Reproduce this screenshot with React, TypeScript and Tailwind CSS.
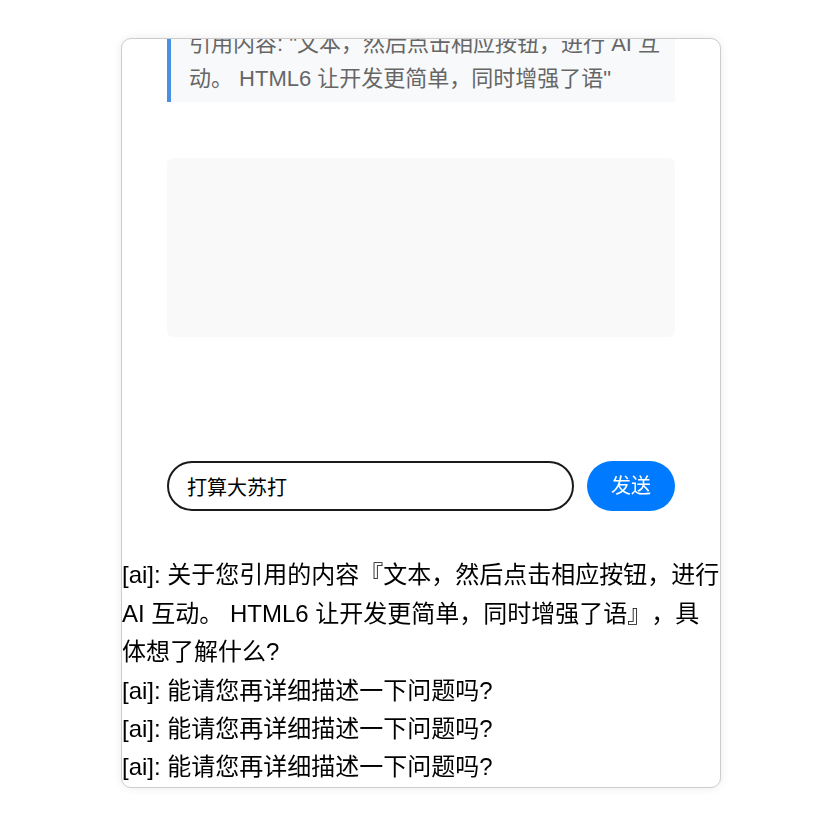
import React, { useEffect, useRef } from "react";

const font = '"Liberation Sans", "Noto Sans CJK SC", Arial, sans-serif';

export default function App() {
  const scroller = useRef<HTMLDivElement>(null);
  useEffect(() => {
    const el = scroller.current;
    if (el) el.scrollTop = el.scrollHeight;
  }, []);

  const messages = [
    "[ai]: 关于您引用的内容『文本，然后点击相应按钮，进行 AI 互动。 HTML6 让开发更简单，同时增强了语』，具体想了解什么?",
    "[ai]: 能请您再详细描述一下问题吗?",
    "[ai]: 能请您再详细描述一下问题吗?",
    "[ai]: 能请您再详细描述一下问题吗?",
  ];

  return (
    <div
      className="min-h-screen bg-white pl-[121px] pt-[38px] [text-spacing-trim:space-all]"
      style={{ fontFamily: font }}
    >
      <div
        ref={scroller}
        className="w-[600px] h-[750px] overflow-hidden rounded-[10px] border border-[#cccccc] bg-white shadow-[0_0_10px_rgba(0,0,0,0.08)]"
      >
        <div className="px-[45px] pt-[40px]">
          <div className="border-l-4 border-[#4a90e2] bg-[#f8f9fa] pl-[18px] pr-[12px] pt-[10px] pb-[6px] text-[22px] leading-[35.2px] text-[#666666]">
            引用内容: "文本，然后点击相应按钮，进行 AI 互动。 HTML6 让开发更简单，同时增强了语"
          </div>
          <div className="mt-[56px] h-[179px] rounded-[6px] bg-[#f9f9f9]" />
          <div className="mt-[124px] flex items-center gap-[13px]">
            <input
              autoFocus
              defaultValue="打算大苏打"
              className="h-[50px] flex-1 rounded-full border-2 border-[#1a1a1a] bg-white pl-[18px] pr-[18px] text-[20px] text-black caret-black outline-none"
              style={{ fontFamily: font }}
            />
            <button className="h-[50px] w-[88px] rounded-full bg-[#007bff] text-[20px] text-white">
              发送
            </button>
          </div>
        </div>
        <div className="mt-[45px] text-[24px] leading-[38.4px] text-black">
          {messages.map((m, i) => (
            <div key={i}>{m}</div>
          ))}
        </div>
      </div>
    </div>
  );
}
